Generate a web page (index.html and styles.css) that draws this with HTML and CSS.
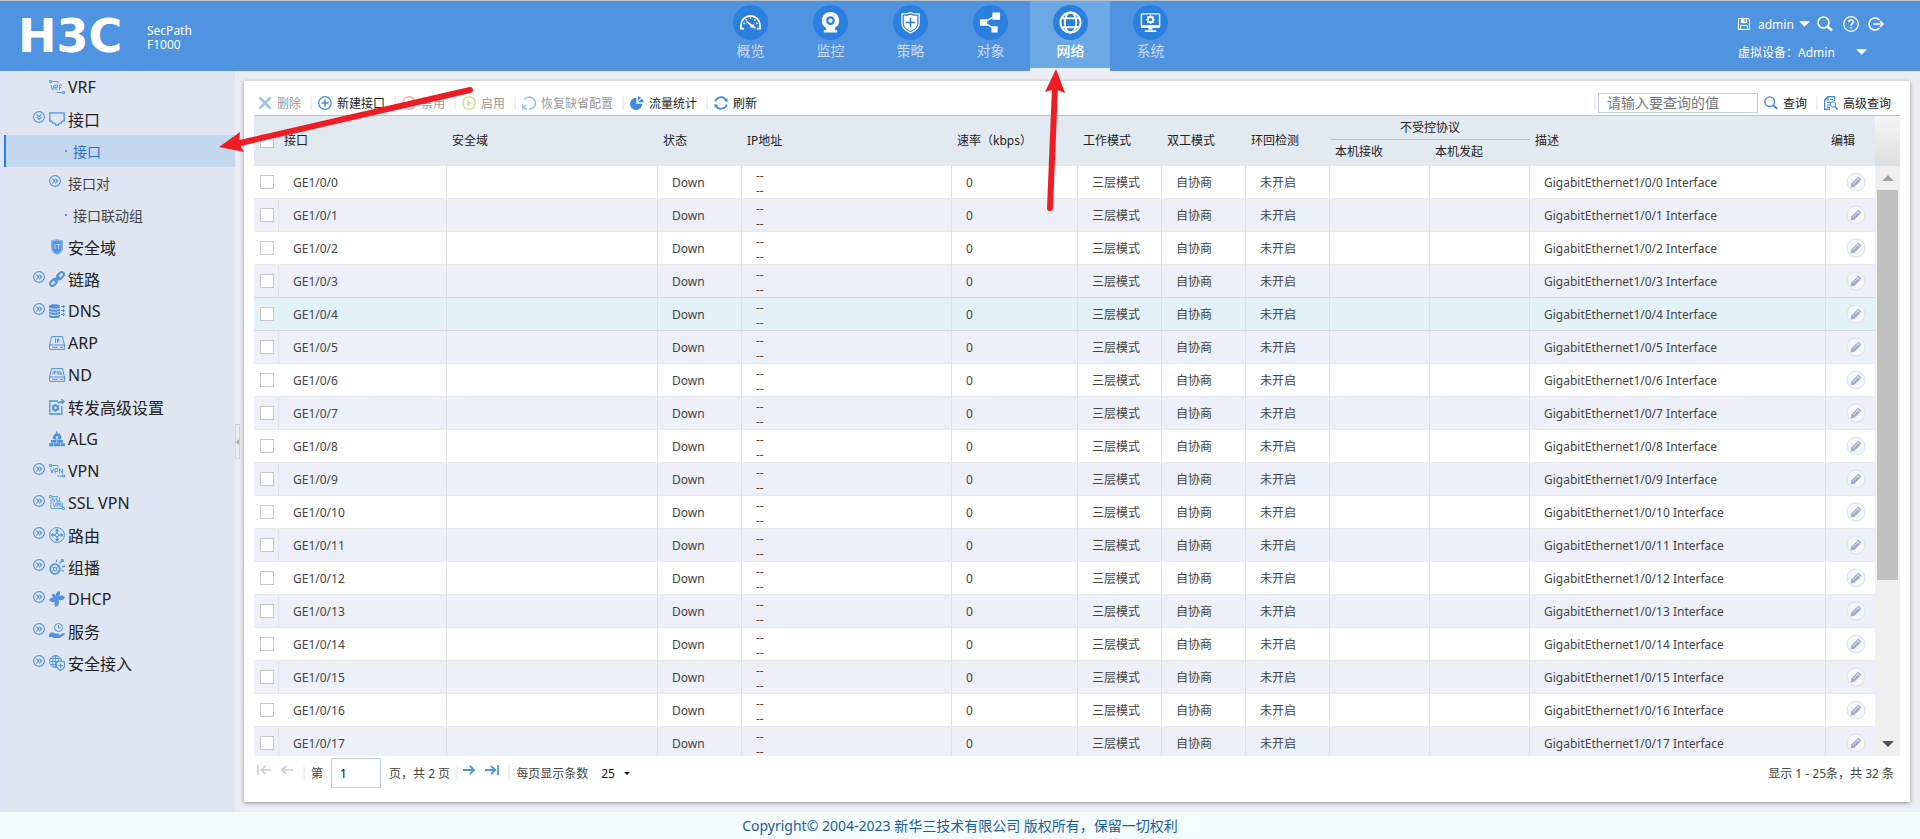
FILE: index.html
```html
<!DOCTYPE html>
<html lang="zh-CN">
<head>
    <meta charset="UTF-8">
    <meta name="viewport" content="width=device-width, initial-scale=1.0">
    <title>H3C SecPath F1000</title>
    <link rel="stylesheet" href="styles.css">
</head>
<body>
    <!-- icon sprite -->
    <svg class="sprite" aria-hidden="true">
        <symbol id="i-gauge" viewBox="0 0 24 24"><g fill="none" stroke="currentColor" stroke-width="1.8" stroke-linecap="round"><path d="M4.500 18.500H2V15a10 10 0 0 1 20 0v3.500h-2.500"/><path d="M5.500 13h.1M7.500 9.200h.1M12 7.500h.1M16.500 9.200h.1M18.500 13h.1"/><path d="M8.500 11.500l8 6"/></g><circle cx="13.500" cy="15.500" r="2" fill="currentColor"/></symbol>
        <symbol id="i-cam" viewBox="0 0 24 24"><path fill="currentColor" fill-rule="evenodd" d="M12 1a9 9 0 0 1 4.500 16.800V20H19v2.500H5V20h2.500v-2.200A9 9 0 0 1 12 1zm0 4.500a4.500 4.500 0 1 0 0 9 4.500 4.500 0 0 0 0-9z"/><circle cx="12" cy="10" r="2.200" fill="currentColor"/></symbol>
        <symbol id="i-shield" viewBox="0 0 24 24"><path fill="none" stroke="currentColor" stroke-width="1.300" d="M12 1.500c3 1.500 6 1.800 9 1.500v10c0 5-5 8-9 10-4-2-9-5-9-10V3c3 .3 6 0 9-1.500z"/><path fill="currentColor" fill-rule="evenodd" d="M12 3.800c2.500 1 4.700 1.300 7 1.200v8c0 4-4 6.400-7 7.900-3-1.500-7-3.900-7-7.900V5c2.300.1 4.500-.2 7-1.200zM11.200 7v4.200H7v1.600h4.200V17h1.600v-4.200H17v-1.600h-4.200V7z"/></symbol>
        <symbol id="i-share" viewBox="0 0 24 24"><path stroke="currentColor" stroke-width="1.500" fill="none" d="M17 5L5 12l12 7"/><path fill="currentColor" d="M14 1.500h8v7.500h-8zM1 8.500h7.500v7H1zM13 16h6.500v6.500H13z"/></symbol>
        <symbol id="i-globe" viewBox="0 0 24 24"><g fill="none" stroke="currentColor" stroke-width="2"><circle cx="12" cy="12" r="10.500"/><ellipse cx="12" cy="12" rx="6" ry="10.500"/><path d="M3 7.500h18M3.500 17h17"/></g></symbol>
        <symbol id="i-monitor" viewBox="0 0 24 24"><rect x="2.500" y="3" width="19" height="14" rx="1" fill="none" stroke="currentColor" stroke-width="1.500"/><path fill="currentColor" d="M3 14.500h18V17H3zM10 17h4v2.500h-4zM6 20h12v1.800H6z"/><circle cx="12" cy="9" r="2.700" fill="none" stroke="currentColor" stroke-width="2"/><path stroke="currentColor" stroke-width="1.500" d="M12 4.500v1.500M12 12v1.500M7.500 9H9M15 9h1.500M8.800 5.800l1 1M14.200 11.200l1 1M15.200 5.800l-1 1M9.800 11.200l-1 1"/></symbol>

        <symbol id="i-save" viewBox="0 0 12 12"><path fill="currentColor" fill-rule="evenodd" d="M0 0h10.500L12 1.500V12H0zM1 1v10h1V7h8v4h1V2l-1-1H9v4H3V1zm2 7v3h6V8zm3.500-7v3H8V1z"/></symbol>
        <symbol id="i-search" viewBox="0 0 16 16"><circle cx="6.500" cy="6.500" r="5.500" fill="none" stroke="currentColor" stroke-width="1.600"/><path d="M10.500 10.500l4.500 4" stroke="currentColor" stroke-width="2.400"/></symbol>
        <symbol id="i-help" viewBox="0 0 16 16"><g fill="none" stroke="currentColor" stroke-width="1.300"><circle cx="8" cy="8" r="7.300"/><path d="M5.800 6.200c0-3 4.500-3 4.500-.2C10.300 7.600 8 7.800 8 9.800M8 11v1.500" stroke-width="1.500"/></g></symbol>
        <symbol id="i-logout" viewBox="0 0 16 14"><path fill="none" stroke="currentColor" stroke-width="1.600" d="M11.500 3A6 6 0 1 0 11.500 11M5.500 7H15M12 4l3 3-3 3"/></symbol>
        <symbol id="i-caret" viewBox="0 0 10 5"><path fill="currentColor" d="M0 0h10L5 5z"/></symbol>

        <symbol id="i-more" viewBox="0 0 12 12"><g fill="none" stroke="currentColor" stroke-width="1.100"><circle cx="6" cy="6" r="5.400"/><path d="M3.500 3.700L5.800 6 3.500 8.300M6.200 3.700L8.500 6 6.200 8.300"/></g></symbol>
        <symbol id="i-vrf" viewBox="0 0 16 16"><path fill="none" stroke="currentColor" stroke-width=".9" d="M.5 1.500h2v2h-2zM3 2.500h6v2M2 6l1.500 5L5 6M6 11V6h2.500v2.500H6l2.500 2.500M10.500 11V6H13M10.500 8.500h2M8 13.500h5M13.500 12.500h2v2h-2z"/></symbol>
        <symbol id="i-vpn" viewBox="0 0 16 16"><path fill="none" stroke="currentColor" stroke-width=".9" d="M.5 1.500h2v2h-2zM3 2.500h6v2M1.500 5.500L3 10l1.500-4.500M6 10.500v-5h2.500v3H6M10.500 10.500v-5l3 5v-5M8 13h5M13.500 12h2v2h-2z"/></symbol>
        <symbol id="i-sslvpn" viewBox="0 0 16 16"><path fill="none" stroke="currentColor" stroke-width=".8" d="M.5.5h2v2h-2zM3 1.500h6M5.500 3h-2v2h2v2h-2M9 3H7v2h2v2H7M10.500 2.500V7H13M4 8l1.500 4L7 8M8 12.500V8h2v2H8M11 12.500V8l2.500 4.500V8M2 4v9.500h11M13.500 12.500h2v2h-2z"/></symbol>
        <symbol id="i-port" viewBox="0 0 16 14"><path fill="none" stroke="currentColor" stroke-width="1.300" d="M.8.8h14.400v8.400h-2l-1 2h-2l-1 1.800H6.800l-1-1.800h-2l-1-2h-2z"/></symbol>
        <symbol id="i-zone" viewBox="0 0 16 16"><path fill="currentColor" opacity=".6" d="M8 0c2 1 4 1.300 6 1v8c0 4-3.500 6-6 7-2.500-1-6-3-6-7V1c2 .3 4 0 6-1z"/><path fill="currentColor" d="M8 1.800c1.500.6 3 .8 4.500.7V9c0 3-2.500 4.500-4.500 5.500C6 13.500 3.500 12 3.500 9V2.500C5 2.600 6.500 2.400 8 1.800z"/><path stroke="#dfe5f1" stroke-width=".8" d="M6 5v5M7.500 5.500h4M9.500 5.500V10"/></symbol>
        <symbol id="i-link" viewBox="0 0 16 16"><g fill="none" stroke="currentColor" stroke-width="2"><rect x="7.500" y="2.300" width="8" height="4.600" rx="2.300" transform="rotate(-45 11.500 4.600)"/><rect x=".5" y="9.200" width="8" height="4.600" rx="2.300" transform="rotate(-45 4.500 11.500)"/><path d="M5.500 10.500l5-5"/></g></symbol>
        <symbol id="i-dns" viewBox="0 0 16 16"><path fill="currentColor" d="M0 3.200C0 .6 11 .6 11 3.200v1C11 6 0 6 0 4.200zM0 5.500c2 1.600 9 1.600 11 0v1.900C11 9.200 0 9.200 0 7.400zM0 8.600c2 1.600 9 1.600 11 0v1.900c0 1.900-11 1.900-11 0zM0 11.700c2 1.600 9 1.600 11 0v1.800c0 2.100-11 2.100-11 0z"/><path stroke="currentColor" stroke-width="1" d="M12 3.500h4M12 7.500h4M12 11.500h4M14.500 2v3M14.500 6v3M14.500 10v3"/></symbol>
        <symbol id="i-arp" viewBox="0 0 16 14"><path fill="none" stroke="currentColor" stroke-width="1" d="M2.500.6h11L15.400 9v4.400H.6V9zM.6 9h14.800M3 11.300h6M11 11.300h3M6.500 2.500V7M8.500 7V3H10v2H8.500"/></symbol>
        <symbol id="i-nd" viewBox="0 0 16 14"><path fill="none" stroke="currentColor" stroke-width="1" d="M2.500.6h11L15.400 9v4.400H.6V9zM.6 9h14.800M3 11.300h6M11 11.300h3"/><path fill="none" stroke="currentColor" stroke-width=".8" d="M4 3v3.500M5.500 6.500V3H7v1.700H5.500M8 3l1 3.500L10 3M11 3v3.500h1.500V5H11"/></symbol>
        <symbol id="i-forward" viewBox="0 0 16 16"><path fill="none" stroke="currentColor" stroke-width="1.300" d="M9 2H.8v13h12V7M9 4.500c1-2 3-2 6-2M12.500.3L15 2.500l-2.500 2.300"/><circle cx="6.500" cy="8.800" r="2.400" fill="none" stroke="currentColor" stroke-width="2"/><path stroke="currentColor" stroke-width="1.300" d="M6.500 4.800v8M3 6.800l7 4M10 6.800l-7 4" stroke-dasharray="1.300 5.400"/></symbol>
        <symbol id="i-alg" viewBox="0 0 16 16"><path fill="currentColor" d="M7 0c2 1.500 1.500 2.500 2.500 3.500L10.500 2c1.500 2.500 2.500 4 1 6.500H4.500C3 6.500 4 4.500 5.500 3.500 6.800 2.500 7 1.500 7 0zM2 9h5.500v2.800H2zM8 9h6v2.800H8zM0 12.300h4.500v3H0zM5 12.300h6v3H5zM11.500 12.300H16v3h-4.500z"/><path fill="#dfe5f1" d="M8 4.500l1.300 2.300L8 8.300 6.700 6.800z"/></symbol>
        <symbol id="i-route" viewBox="0 0 16 16"><circle cx="8" cy="8" r="7.400" fill="none" stroke="currentColor"/><path fill="none" stroke="currentColor" stroke-width="1.300" d="M8 6V3M8 10v3M6 8H3M10 8h3M6.500 4L8 2.500 9.500 4M6.500 12L8 13.500 9.500 12M4 6.500L2.500 8 4 9.500M12 6.500L13.500 8 12 9.500"/><circle cx="8" cy="8" r="1.800" fill="none" stroke="currentColor"/></symbol>
        <symbol id="i-cast" viewBox="0 0 16 16"><g fill="none" stroke="currentColor"><circle cx="6" cy="10" r="4.800" stroke-width="1.800"/><circle cx="6" cy="10" r="1.600"/><path d="M2.500 7l2 2M9.500 13l-2-2M2.500 13l2-2M9.500 7l-2 2"/><path stroke-width="1.400" d="M7.500.5V3M10.500 4.500L13 2M13 7.500h3M12.500 11l2.500 1.500M12 .8l2 .2.200 2"/></g></symbol>
        <symbol id="i-dhcp" viewBox="0 0 16 16"><path fill="currentColor" d="M8 7C6 4 7 1 10.500 0c.8 2 .8 3.500-.5 5.200 1.800-1 4-1.200 6 1.300-1.500 3-4.500 3.500-7 1.700C11 10.500 10.500 14.500 6.500 16 5 14 5 12 6.500 10.500 4 12 1.500 11 0 8.800 2 6 5 5.500 7.500 8L4 6.500 2.500 3.500 5.500 3z"/></symbol>
        <symbol id="i-service" viewBox="0 0 16 16"><circle cx="9.500" cy="4.500" r="4" fill="none" stroke="currentColor"/><path fill="none" stroke="currentColor" d="M9.500 2v3h2"/><path fill="currentColor" d="M0 11c2-2 4.500-1.800 6-.5h3.500c1 .5.500 1.500-.5 1.500h1.500l4-2c1.500 0 1.800 1 .8 1.800L11 15H5l-2-1H0z"/></symbol>
        <symbol id="i-access" viewBox="0 0 16 16"><g fill="none" stroke="currentColor" stroke-width=".9"><circle cx="6.500" cy="6.500" r="6"/><ellipse cx="6.500" cy="6.500" rx="3" ry="6"/><path d="M.5 6.500H12M1.500 3.500h10M1.500 9.500h6M6.500.5v12"/></g><path fill="#dfe5f1" stroke="currentColor" stroke-width="1.200" d="M11.500 6c1.500.8 2.500 1 4 1v3.500c0 2.500-2 4-4 5-2-1-4-2.500-4-5V7c1.500 0 2.500-.2 4-1z"/><path stroke="currentColor" stroke-width="1.200" d="M11.500 8.500v4.500M9.300 10.700h4.500"/></symbol>

        <symbol id="i-del" viewBox="0 0 14 14"><path stroke="currentColor" stroke-width="2.600" d="M1.500 1.500l11 11M12.500 1.500l-11 11"/></symbol>
        <symbol id="i-add" viewBox="0 0 14 14"><circle cx="7" cy="7" r="6.300" fill="none" stroke="currentColor" stroke-width="1.200"/><path stroke="currentColor" stroke-width="1.600" d="M7 3.500v7M3.500 7h7"/></symbol>
        <symbol id="i-ban" viewBox="0 0 14 14"><circle cx="7" cy="7" r="6.300" fill="none" stroke="currentColor" stroke-width="1.200"/><path stroke="currentColor" stroke-width="1.600" d="M4 7h6"/></symbol>
        <symbol id="i-play" viewBox="0 0 14 14"><circle cx="7" cy="7" r="6.200" fill="none" stroke="currentColor" stroke-width="1.400"/><path fill="currentColor" d="M5.300 4l4.500 3-4.500 3z"/></symbol>
        <symbol id="i-restore" viewBox="0 0 14 14"><path fill="none" stroke="currentColor" stroke-width="1.700" d="M2.500 3.500A6 6 0 1 1 7 13M.5 8v4.500H5M1 12l3-3"/></symbol>
        <symbol id="i-pie" viewBox="0 0 14 14"><path fill="currentColor" d="M6.300 1.800V7.700h5.900A6.100 6.100 0 1 1 6.300 1.800z"/><path fill="currentColor" d="M7.800.2a6 6 0 0 1 3.200 1.500L7.800 5zM11.800 2.500A6 6 0 0 1 13.600 6.300H8.200z"/></symbol>
        <symbol id="i-refresh" viewBox="0 0 14 14"><path fill="none" stroke="currentColor" stroke-width="1.700" d="M1.200 5.500A6 6 0 0 1 12 4M12.800 8.500A6 6 0 0 1 2 10"/><path fill="currentColor" d="M13.500 2v4L10 5zM.5 12V8L4 9z"/></symbol>
        <symbol id="i-adv" viewBox="0 0 14 14"><path fill="none" stroke="currentColor" stroke-width="1.200" d="M6 13.400H.6V4L4 .6h6.400V5M4 .6V4H.6M3 6.500h4M3 9h3M3 11.300h3M6 3.500h3"/><circle cx="9" cy="8.500" r="2.700" fill="none" stroke="currentColor"/><path stroke="currentColor" stroke-width="1.500" d="M11 10.500l2.700 3"/></symbol>
        <symbol id="i-edit" viewBox="0 0 20 20"><circle cx="10" cy="10" r="9" fill="#f5f7fb" stroke="#dbe1ea"/><path fill="#a4acca" d="M4.500 15.500l.8-4 7-7 3.200 3.200-7 7z"/><path stroke="#f5f7fb" stroke-width=".7" d="M7 12l5-5M11 5.800l3.200 3.200"/></symbol>
        <symbol id="i-first" viewBox="0 0 14 10"><path fill="none" stroke="currentColor" stroke-width="1.600" d="M1 0v10M14 5H4.500M8.500 .8L4.300 5l4.200 4.200"/></symbol>
        <symbol id="i-prev" viewBox="0 0 14 10"><path fill="none" stroke="currentColor" stroke-width="1.600" d="M13 5H2M6.200 .8L2 5l4.200 4.200"/></symbol>
        <symbol id="i-next" viewBox="0 0 14 10"><path fill="none" stroke="currentColor" stroke-width="1.800" d="M1 5h11M7.800 .8L12 5 7.800 9.200"/></symbol>
        <symbol id="i-last" viewBox="0 0 14 10"><path fill="none" stroke="currentColor" stroke-width="1.800" d="M13 0v10M0 5h10M6 .8L10.200 5 6 9.200"/></symbol>
    </svg>

    <header class="header">
        <div class="brand">
            <div class="logo">H3C</div>
            <div class="product">SecPath<br>F1000</div>
        </div>
        <nav class="topnav">
            <a href="#"><span class="circle"><svg><use href="#i-gauge"/></svg></span>概览</a>
            <a href="#"><span class="circle"><svg><use href="#i-cam"/></svg></span>监控</a>
            <a href="#"><span class="circle"><svg><use href="#i-shield"/></svg></span>策略</a>
            <a href="#"><span class="circle"><svg><use href="#i-share"/></svg></span>对象</a>
            <a href="#" class="active"><span class="circle"><svg><use href="#i-globe"/></svg></span>网络</a>
            <a href="#"><span class="circle"><svg><use href="#i-monitor"/></svg></span>系统</a>
        </nav>
        <div class="user">
            <div class="user-row">
                <button aria-label="保存"><svg class="s12"><use href="#i-save"/></svg></button>
                <button class="name">admin<svg class="caret"><use href="#i-caret"/></svg></button>
                <button aria-label="搜索"><svg class="s16"><use href="#i-search"/></svg></button>
                <button class="help" aria-label="帮助"><svg class="s16"><use href="#i-help"/></svg></button>
                <button aria-label="退出"><svg class="s16"><use href="#i-logout"/></svg></button>
            </div>
            <div class="user-row vdev">
                <label for="vdev">虚拟设备：</label>
                <select id="vdev"><option>Admin</option></select>
                <svg class="caret"><use href="#i-caret"/></svg>
            </div>
        </div>
    </header>

    <div class="main">
        <nav class="sidebar">
            <a href="#"><i class="exp"></i><svg class="ico"><use href="#i-vrf"/></svg>VRF</a>
            <a href="#"><svg class="exp open"><use href="#i-more"/></svg><svg class="ico"><use href="#i-port"/></svg>接口</a>
            <a href="#" class="sub leaf selected">接口</a>
            <a href="#" class="sub"><svg class="exp"><use href="#i-more"/></svg>接口对</a>
            <a href="#" class="sub leaf">接口联动组</a>
            <a href="#"><i class="exp"></i><svg class="ico"><use href="#i-zone"/></svg>安全域</a>
            <a href="#"><svg class="exp"><use href="#i-more"/></svg><svg class="ico"><use href="#i-link"/></svg>链路</a>
            <a href="#"><svg class="exp"><use href="#i-more"/></svg><svg class="ico"><use href="#i-dns"/></svg>DNS</a>
            <a href="#"><i class="exp"></i><svg class="ico"><use href="#i-arp"/></svg>ARP</a>
            <a href="#"><i class="exp"></i><svg class="ico"><use href="#i-nd"/></svg>ND</a>
            <a href="#"><i class="exp"></i><svg class="ico"><use href="#i-forward"/></svg>转发高级设置</a>
            <a href="#"><i class="exp"></i><svg class="ico"><use href="#i-alg"/></svg>ALG</a>
            <a href="#"><svg class="exp"><use href="#i-more"/></svg><svg class="ico"><use href="#i-vpn"/></svg>VPN</a>
            <a href="#"><svg class="exp"><use href="#i-more"/></svg><svg class="ico"><use href="#i-sslvpn"/></svg>SSL VPN</a>
            <a href="#"><svg class="exp"><use href="#i-more"/></svg><svg class="ico"><use href="#i-route"/></svg>路由</a>
            <a href="#"><svg class="exp"><use href="#i-more"/></svg><svg class="ico"><use href="#i-cast"/></svg>组播</a>
            <a href="#"><svg class="exp"><use href="#i-more"/></svg><svg class="ico"><use href="#i-dhcp"/></svg>DHCP</a>
            <a href="#"><svg class="exp"><use href="#i-more"/></svg><svg class="ico"><use href="#i-service"/></svg>服务</a>
            <a href="#"><svg class="exp"><use href="#i-more"/></svg><svg class="ico"><use href="#i-access"/></svg>安全接入</a>
        </nav>
        <div class="gutter"><button class="collapse" aria-label="收起"></button></div>

        <section class="card">
            <div class="toolbar">
                <button disabled><svg class="c-blue"><use href="#i-del"/></svg>删除</button>
                <button><svg class="c-blue"><use href="#i-add"/></svg>新建接口</button>
                <button disabled><svg class="c-red"><use href="#i-ban"/></svg>禁用</button>
                <button disabled><svg class="c-green"><use href="#i-play"/></svg>启用</button>
                <button disabled><svg class="c-blue"><use href="#i-restore"/></svg>恢复缺省配置</button>
                <button><svg class="c-blue"><use href="#i-pie"/></svg>流量统计</button>
                <button><svg class="c-blue"><use href="#i-refresh"/></svg>刷新</button>
                <div class="search">
                    <input type="text" placeholder="请输入要查询的值" aria-label="查询">
                    <button><svg class="c-blue"><use href="#i-search"/></svg>查询</button>
                    <button><svg class="c-blue"><use href="#i-adv"/></svg>高级查询</button>
                </div>
            </div>

            <div class="grid">
                <div class="table-wrap">
                    <table>
                        <colgroup>
                            <col class="w-check"><col class="w-name"><col class="w-zone"><col class="w-mode">
                            <col class="w-ip"><col class="w-rate"><col class="w-mode"><col class="w-mode">
                            <col class="w-mode"><col class="w-proto"><col class="w-proto"><col><col class="w-edit">
                        </colgroup>
                        <thead>
                            <tr>
                                <th rowspan="2" class="check"><input type="checkbox" aria-label="全选"></th>
                                <th rowspan="2">接口</th>
                                <th rowspan="2">安全域</th>
                                <th rowspan="2">状态</th>
                                <th rowspan="2">IP地址</th>
                                <th rowspan="2">速率（kbps）</th>
                                <th rowspan="2">工作模式</th>
                                <th rowspan="2">双工模式</th>
                                <th rowspan="2">环回检测</th>
                                <th colspan="2" class="group">不受控协议</th>
                                <th rowspan="2">描述</th>
                                <th rowspan="2">编辑</th>
                            </tr>
                            <tr class="second">
                                <th>本机接收</th>
                                <th>本机发起</th>
                            </tr>
                        </thead>
                        <tbody id="rows"></tbody>
                    </table>
                </div>
                <div class="scroll">
                    <div class="scroll-head"></div>
                    <div class="track">
                        <i class="up"></i>
                        <div class="thumb-area"><div class="thumb"></div></div>
                        <i class="down"></i>
                    </div>
                </div>
            </div>

            <div class="pager">
                <button disabled aria-label="首页"><svg><use href="#i-first"/></svg></button>
                <button disabled aria-label="上一页"><svg><use href="#i-prev"/></svg></button>
                <i class="sep"></i>
                <label for="page">第</label>
                <input type="text" id="page" value="1">
                <span>页，共 2 页</span>
                <i class="sep"></i>
                <button aria-label="下一页"><svg><use href="#i-next"/></svg></button>
                <button aria-label="末页"><svg><use href="#i-last"/></svg></button>
                <i class="sep"></i>
                <label for="size">每页显示条数</label>
                <select id="size"><option>25</option></select>
                <svg class="caret"><use href="#i-caret"/></svg>
                <span class="total">显示 1 - 25条，共 32 条</span>
            </div>
        </section>
    </div>

    <footer class="footer">Copyright© 2004-2023 新华三技术有限公司 版权所有，保留一切权利</footer>

    <svg class="arrow arrow-side" viewBox="0 0 260 70"><path d="M254 7L24 60" stroke="#ee1c25" stroke-width="6" stroke-linecap="round"/><path fill="#ee1c25" d="M3 64L24 49l-1 11 5 9z"/></svg>
    <svg class="arrow arrow-top" viewBox="0 0 24 146"><path d="M8 139L13 18" stroke="#ee1c25" stroke-width="6" stroke-linecap="round"/><path fill="#ee1c25" d="M14 0L3 23l10-3 10 4z"/></svg>

    <script>
        const rows = document.getElementById("rows");
        let html = "";
        for(let i = 0; i < 18; i++){
            html += `<tr${i === 4 ? ' class="hover"' : ''}>
                <td class="check"><input type="checkbox" aria-label="GE1/0/${i}"></td>
                <td>GE1/0/${i}</td>
                <td></td>
                <td>Down</td>
                <td>--<br>--</td>
                <td>0</td>
                <td>三层模式</td>
                <td>自协商</td>
                <td>未开启</td>
                <td></td>
                <td></td>
                <td>GigabitEthernet1/0/${i} Interface</td>
                <td class="edit"><button aria-label="编辑"><svg><use href="#i-edit"/></svg></button></td>
            </tr>`;
        }
        rows.innerHTML = html;
    </script>
</body>
</html>
```
FILE: styles.css
```css
*{
    box-sizing: border-box;
}
body{
    margin: 0;
    height: 100vh;
    display: flex;
    flex-direction: column;
    position: relative;
    overflow: hidden;
    font-family: "Noto Sans", "Noto Sans CJK SC", sans-serif;
    font-size: 12px;
    color: #222;
    background: #ecedf3;
}
a{
    text-decoration: none;
    color: inherit;
}
button, input, select{
    font: inherit;
    color: inherit;
}
button{
    border: none;
    background: none;
    padding: 0;
    display: flex;
    align-items: center;
    cursor: pointer;
}
select{
    appearance: none;
    border: none;
    background: none;
    padding: 0;
}
svg{
    flex: none;
    display: block;
}
.sprite{
    display: none;
}
.caret{
    width: 11px;
    height: 6px;
}

/* header */
.header{
    flex: none;
    height: 71px;
    display: flex;
    border-top: 1px solid #b9c3cf;
    background: #4f93e1;
    color: #fff;
}
.brand{
    width: 37%;
    display: flex;
    padding: 15px 0 0 18px;
}
.logo{
    width: 129px;
    font-family: "DejaVu Sans", sans-serif;
    font-size: 46px;
    font-weight: bold;
    line-height: 40px;
}
.product{
    line-height: 14px;
    padding-top: 8px;
}
.topnav{
    display: flex;
}
.topnav a{
    width: 80px;
    display: flex;
    flex-direction: column;
    align-items: center;
    padding-top: 4px;
    font-size: 14px;
    line-height: 22px;
    color: #c6dcf5;
}
.topnav .active{
    background: #6ca7e6;
    border-bottom: 3px solid #ecf2fb;
    color: #fff;
    font-weight: 500;
}
.circle{
    width: 35px;
    height: 35px;
    border-radius: 50%;
    background: #2b7fde;
    color: #fff;
    display: flex;
    align-items: center;
    justify-content: center;
}
.circle svg{
    width: 23px;
    height: 23px;
}
.user{
    margin-left: auto;
    width: 182px;
    padding-top: 13px;
}
.user-row{
    display: flex;
    align-items: center;
    gap: 8px;
    height: 20px;
}
.user-row .name{
    gap: 5px;
    margin-right: -1px;
}
.user-row .help{
    margin: 0 1px 0 2px;
}
.vdev{
    margin-top: 8px;
    gap: 0;
}
.vdev select{
    width: 58px;
}
.s12{
    width: 12px;
    height: 12px;
}
.s16{
    width: 16px;
    height: 16px;
}

/* body */
.main{
    flex: 1;
    min-height: 0;
    display: flex;
    padding-right: 10px;
}
.sidebar{
    flex: none;
    width: 235px;
    border-left: 4px solid #dce6f8;
    background: #dfe5f1;
    color: #222;
}
.sidebar a{
    display: flex;
    align-items: center;
    height: 32px;
    padding-left: 29px;
    font-size: 16px;
}
.sidebar .exp{
    width: 12px;
    height: 12px;
    margin: 0 4px 4px 0;
    color: #4f93e1;
}
.sidebar .open{
    transform: rotate(90deg);
}
.sidebar .ico{
    width: 16px;
    height: 16px;
    margin-right: 3px;
    color: #4f93e1;
}
.sidebar .sub{
    padding-left: 45px;
    font-size: 14px;
    color: #444;
}
.sidebar .sub .exp{
    margin-right: 7px;
}
.sidebar .leaf{
    padding-left: 61px;
}
.sidebar .leaf::before{
    content: "";
    width: 2px;
    height: 2px;
    margin-right: 6px;
    background: #4f93e1;
}
.sidebar .selected{
    padding-left: 59px;
    border-left: 2px solid #2b7fde;
    background: #c3d7ef;
    color: #2b6fd8;
}
.gutter{
    flex: none;
    width: 9px;
    display: flex;
    align-items: center;
}
.collapse{
    width: 5px;
    height: 35px;
    border: 1px solid #cdd2e8;
}
.collapse::before{
    content: "";
    border: 3px solid transparent;
    border-right-color: #aaa;
    border-left: none;
}

.card{
    flex: 1;
    min-width: 0;
    display: flex;
    flex-direction: column;
    margin: 10px 0;
    padding: 0 10px;
    background: #fff;
    box-shadow: 0 1px 4px rgba(0, 0, 0, 0.4);
}

/* toolbar */
.toolbar{
    flex: none;
    height: 35px;
    padding: 9px 0 0 4px;
    display: flex;
    align-items: center;
    border-bottom: 1px solid #bfc3c7;
    white-space: nowrap;
}
.toolbar button{
    gap: 5px;
    padding-right: 9px;
}
.toolbar button + button::before, .search::before{
    content: "";
    width: 2px;
    height: 14px;
    margin-right: 1px;
    background: #f0f0f0;
}
.toolbar button:disabled{
    color: #999;
}
.toolbar button:disabled svg{
    opacity: 0.5;
}
.toolbar svg{
    width: 14px;
    height: 14px;
}
.search{
    margin-left: auto;
    display: flex;
    align-items: center;
}
.search input{
    width: 160px;
    height: 20px;
    margin: 0 6px 0 1px;
    padding: 0 8px;
    border: 1px solid #c3cee0;
    font-size: 14px;
}
.search input::placeholder{
    color: #777;
}
.c-blue{
    color: #3f8ae0;
}
.c-red{
    color: #f23c3c;
}
.c-green{
    color: #86cc30;
}

/* table */
.grid{
    flex: 1;
    min-height: 0;
    display: flex;
}
.table-wrap{
    flex: 1;
    min-width: 0;
    overflow: hidden;
}
table{
    width: 100%;
    table-layout: fixed;
    border-collapse: separate;
    border-spacing: 0;
}
.w-check{ width: 25px; }
.w-name{ width: 168px; }
.w-zone{ width: 211px; }
.w-mode{ width: 84px; }
.w-ip{ width: 210px; }
.w-rate{ width: 126px; }
.w-proto{ width: 100px; }
.w-edit{ width: 49px; }
th{
    height: 24px;
    padding: 0 5px;
    background: #e2e9f0;
    font-weight: normal;
    text-align: left;
    white-space: nowrap;
    line-height: 16px;
}
.group{
    text-align: center;
    border-bottom: 1px solid #bfc3c7;
}
.second th{
    height: 26px;
    padding-bottom: 2px;
}
td{
    height: 33px;
    padding: 1px 0 0 14px;
    border-right: 1px solid #dde0e5;
    border-bottom: 1px solid #e8eaee;
    line-height: 15px;
    color: #444;
    white-space: nowrap;
}
td:last-child{
    border-right: none;
}
tbody tr:nth-child(even){
    background: #edf0f8;
}
tbody .hover td{
    background: #e3f1f8;
}
tbody .hover td, tr:has(+ .hover) td{
    border-bottom-color: #d6dbdf;
}
tr .check{
    padding: 0 0 0 6px;
}
tr:nth-child(odd) .check{
    border-right-color: transparent;
}
.check input{
    appearance: none;
    display: block;
    width: 14px;
    height: 14px;
    margin: 0;
    border: 1px solid #c8c8c8;
    background: #fff;
}
.edit{
    padding: 0 0 0 20px;
}
.edit svg{
    width: 20px;
    height: 20px;
}
.scroll{
    flex: none;
    width: 25px;
    display: flex;
    flex-direction: column;
}
.scroll-head{
    height: 50px;
    background: linear-gradient(#f5f5f5, #dedede);
}
.track{
    flex: 1;
    display: flex;
    flex-direction: column;
    align-items: center;
    justify-content: space-between;
    padding: 9px 0;
    background: #f0f0f0;
}
.up, .down{
    border: 6px solid transparent;
}
.up{
    border-top: none;
    border-bottom-color: #a3a3a3;
}
.down{
    border-bottom: none;
    border-top-color: #505050;
}
.thumb-area{
    flex: 1;
    width: 21px;
    margin: 9px 0;
}
.thumb{
    height: 72%;
    background: #c1c1c1;
}

/* pager */
.pager{
    flex: none;
    height: 46px;
    padding: 0 6px 12px 3px;
    display: flex;
    align-items: center;
    color: #444;
}
.pager svg{
    width: 14px;
    height: 10px;
}
.pager button{
    margin: 0 9px 6px 0;
    color: #4f93e1;
}
.pager button:disabled{
    color: #ccc;
}
.sep{
    width: 2px;
    height: 14px;
    margin-right: 6px;
    background: #f0f0f0;
}
.pager input{
    width: 50px;
    height: 30px;
    margin: 0 8px;
    padding: 0 8px;
    border: 1px solid #c0cce0;
    color: #111;
}
.pager span + .sep{
    margin: 0 4px 0 6px;
}
.pager select{
    width: 23px;
    margin-left: 13px;
    color: #111;
}
.pager .caret{
    width: 6px;
    height: 3px;
    color: #111;
}
.total{
    margin-left: auto;
}

.footer{
    flex: none;
    height: 27px;
    line-height: 27px;
    text-align: center;
    font-size: 14px;
    color: #1c5f9c;
    background: #f4fbfb;
}

/* annotation arrows */
.arrow{
    position: absolute;
    fill: none;
    pointer-events: none;
}
.arrow-side{
    left: 216px;
    top: 83px;
    width: 260px;
    height: 70px;
}
.arrow-top{
    left: calc(37% + 332px);
    top: 69px;
    width: 24px;
    height: 146px;
}
```
